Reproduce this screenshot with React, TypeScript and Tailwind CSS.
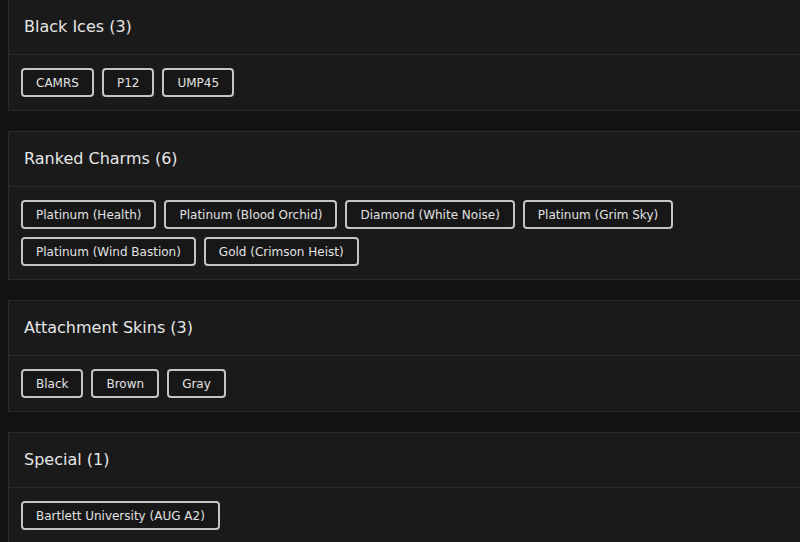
const sections = [
  { title: "Black Ices", items: ["CAMRS", "P12", "UMP45"] },
  {
    title: "Ranked Charms",
    items: [
      "Platinum (Health)",
      "Platinum (Blood Orchid)",
      "Diamond (White Noise)",
      "Platinum (Grim Sky)",
      "Platinum (Wind Bastion)",
      "Gold (Crimson Heist)",
    ],
  },
  { title: "Attachment Skins", items: ["Black", "Brown", "Gray"] },
  { title: "Special", items: ["Bartlett University (AUG A2)"] },
];

const Section = ({ title, items }: { title: string; items: string[] }) => (
  <div className="w-[900px] bg-[#1a1a1a] border border-[#2a2a2a]">
    <div className="h-[55px] flex items-center pl-[15px] border-b border-[#2a2a2a]">
      <h2 className="text-[16px] text-[#e6e6e6]">
        {title} ({items.length})
      </h2>
    </div>
    <div className="flex flex-wrap gap-x-[8px] gap-y-[8px] w-[690px] px-[12px] py-[13px]">
      {items.map((item) => (
        <span
          key={item}
          className="h-[29px] flex items-center px-[13px] border-2 border-[#c4c4c4] rounded-[4px] bg-[#171717] text-[12px] text-[#e2e2e2]"
        >
          {item}
        </span>
      ))}
    </div>
  </div>
);

export default function App() {
  return (
    <div className="w-[800px] h-[542px] overflow-hidden bg-[#121212]">
      <div
        className="-mt-px pl-[8px] flex flex-col gap-[20px]"
        style={{ fontFamily: '"DejaVu Sans", sans-serif' }}
      >
        {sections.map((s) => (
          <Section key={s.title} title={s.title} items={s.items} />
        ))}
      </div>
    </div>
  );
}
